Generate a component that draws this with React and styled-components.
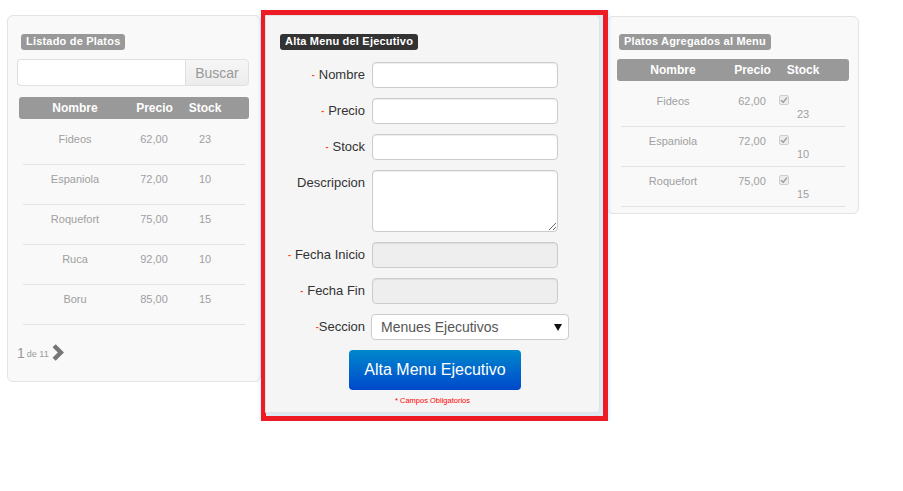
import styled, { createGlobalStyle } from "styled-components"

const GlobalStyle = createGlobalStyle`
  body {
    margin: 0;
    background: #fff;
    font-family: "Liberation Sans", Arial, sans-serif;
  }
`

// Data for both tables
const platos = [
    { nombre: "Fideos", precio: "62,00", stock: 23 },
    { nombre: "Espaniola", precio: "72,00", stock: 10 },
    { nombre: "Roquefort", precio: "75,00", stock: 15 },
    { nombre: "Ruca", precio: "92,00", stock: 10 },
    { nombre: "Boru", precio: "85,00", stock: 15 },
]
const agregados = platos.slice(0, 3)

const campos = [
    { label: "Nombre", req: true, kind: "input" },
    { label: "Precio", req: true, kind: "input" },
    { label: "Stock", req: true, kind: "input" },
    { label: "Descripcion", req: false, kind: "textarea" },
    { label: "Fecha Inicio", req: true, kind: "disabled" },
    { label: "Fecha Fin", req: true, kind: "disabled" },
]

const Check = () => (
    <CheckBox>
        <svg width="8" height="8" viewBox="0 0 8 8">
            <path d="M1 4.2 L3.2 6.3 L7 1.6" fill="none" stroke="#9a9a9a" strokeWidth="1.4" />
        </svg>
    </CheckBox>
)

const App = () => {
    return (
        <Page>
            <GlobalStyle />

            <Panel $width="254px" $pad="18px 9px 20px">
                <Badge $indent="4px">Listado de Platos</Badge>
                <Search>
                    <SearchInput />
                    <SearchButton>Buscar</SearchButton>
                </Search>
                <HeadRow $space="11px 2px 6px">
                    <span>Nombre</span>
                    <span>Precio</span>
                    <span>Stock</span>
                </HeadRow>
                <Rows $side="6px">
                    {platos.map(p => (
                        <Row key={p.nombre}>
                            <Cell>{p.nombre}</Cell>
                            <Cell>{p.precio}</Cell>
                            <StockCell>{p.stock}</StockCell>
                        </Row>
                    ))}
                </Rows>
                <Pager>
                    <span className="num">1</span>
                    <span className="de">de 11</span>
                    <svg width="14" height="17" viewBox="0 0 14 17">
                        <path d="M1.5 3.2 L4.7 0.2 L13 8.5 L4.7 16.8 L1.5 13.8 L6.8 8.5 Z" fill="#777" />
                    </svg>
                </Pager>
            </Panel>

            <Frame>
                <FormPanel>
                    <Badge $dark $indent="14px">Alta Menu del Ejecutivo</Badge>
                    <Form>
                        {campos.map(c => (
                            <Field key={c.label}>
                                <Label>
                                    {c.req && <Req>-</Req>}
                                    {c.label}
                                </Label>
                                {c.kind === "textarea"
                                    ? <TextArea />
                                    : <Input disabled={c.kind === "disabled"} />}
                            </Field>
                        ))}
                        <Field>
                            <Label><Req $tight>-</Req>Seccion</Label>
                            <SelectBox>
                                <span>Menues Ejecutivos</span>
                                <svg width="8" height="7" viewBox="0 0 8 7">
                                    <path d="M0 0 L8 0 L4 7 Z" fill="#111" />
                                </svg>
                            </SelectBox>
                        </Field>
                    </Form>
                    <Submit>Alta Menu Ejecutivo</Submit>
                    <Required>* Campos Obligatorios</Required>
                </FormPanel>
            </Frame>

            <Panel $width="252px" $pad="17px 9px 6px" $shift="-1px">
                <Badge $indent="2px">Platos Agregados al Menu</Badge>
                <HeadRow $space="9px 0 6px">
                    <span>Nombre</span>
                    <span>Precio</span>
                    <span>Stock</span>
                </HeadRow>
                <Rows $side="4px">
                    {agregados.map(p => (
                        <Row key={p.nombre}>
                            <Cell>{p.nombre}</Cell>
                            <Cell>{p.precio}</Cell>
                            <StockCell $stack>
                                <Check />
                                <div>{p.stock}</div>
                            </StockCell>
                        </Row>
                    ))}
                </Rows>
            </Panel>
        </Page>
    )
}

const Page = styled.div`
    display: flex;
    align-items: flex-start;
    padding: 15px 0 0 7px;
`

const Panel = styled.div`
    box-sizing: border-box;
    width: ${({$width}) => $width};
    padding: ${({$pad}) => $pad};
    margin-left: ${({$shift}) => $shift || "0"};
    margin-top: ${({$shift}) => $shift ? "1px" : "0"};
    background: #f9f9f9;
    border: 1px solid #e3e3e3;
    border-radius: 6px;
`

const Badge = styled.div`
    width: fit-content;
    margin-left: ${({$indent}) => $indent || "0"};
    padding: 1px 5px 2px;
    border-radius: 3px;
    background: ${({$dark}) => $dark ? "#333" : "#999"};
    color: #fff;
    font-size: 11px;
    font-weight: bold;
    line-height: 13px;
    letter-spacing: 0.2px;
`

const Search = styled.div`
    display: flex;
    margin-top: 9px;
    height: 27px;
`

const SearchInput = styled.div`
    box-sizing: border-box;
    width: 168px;
    background: #fff;
    border: 1px solid #e0e0e0;
    border-right: none;
    border-radius: 4px 0 0 4px;
`

const SearchButton = styled.div`
    box-sizing: border-box;
    width: 64px;
    display: flex;
    align-items: center;
    justify-content: center;
    background: linear-gradient(#f6f6f6, #ececec);
    border: 1px solid #e0e0e0;
    border-radius: 0 4px 4px 0;
    color: #999;
    font-size: 14px;
`

const HeadRow = styled.div`
    display: grid;
    grid-template-columns: 112px 47px 54px 1fr;
    align-items: center;
    height: 22px;
    margin: ${({$space}) => $space};
    border-radius: 3px;
    background: #999;
    color: #fff;
    font-size: 12px;
    font-weight: bold;
    text-align: center;
`

const Rows = styled.div`
    margin: 0 ${({$side}) => $side};
`

const Row = styled.div`
    display: grid;
    grid-template-columns: 104px 54px 1fr;
    height: 39px;
    border-bottom: 1px solid #e3e3e3;
    color: #a0a0a0;
    font-size: 11px;
    line-height: 13px;
`

const Cell = styled.div`
    padding-top: 8px;
    text-align: center;
`

const StockCell = styled.div`
    padding-top: ${({$stack}) => $stack ? "5px" : "8px"};
    padding-left: ${({$stack}) => $stack ? "0" : "18px"};

    div {
        padding-left: 18px;
    }
`

const CheckBox = styled.span`
    box-sizing: border-box;
    display: flex;
    align-items: center;
    justify-content: center;
    width: 10px;
    height: 10px;
    margin: 3px 0 3px;
    background: #ececec;
    border: 1px solid #cfcfcf;
    border-radius: 2px;
`

const Pager = styled.div`
    display: flex;
    align-items: center;
    margin-top: 19px;
    color: #999;

    .num {
        font-size: 14px;
    }

    .de {
        margin: 3px 2px 0 2px;
        font-size: 9px;
    }
`

const Frame = styled.div`
    position: relative;
    z-index: 1;
    box-sizing: border-box;
    width: 347px;
    margin-top: -5px;
    padding: 0 3px 3px 0;
    border: 5px solid #ed1c24;
    background: #dde9f4;
    box-shadow: 0 2px 4px rgba(82, 168, 236, 0.35);
`

const FormPanel = styled.div`
    margin-left: -1px;
    padding: 18px 0 7px;
    background: #f5f5f5;
    border: 1px solid #e3e3e3;
    border-radius: 0 4px 4px 0;
    text-align: center;
`

const Form = styled.div`
    display: flex;
    flex-direction: column;
    gap: 10px;
    margin-top: 12px;
`

const Field = styled.div`
    display: grid;
    grid-template-columns: 99px auto;
    column-gap: 7px;
    align-items: start;
    text-align: left;
`

const Label = styled.div`
    text-align: right;
    color: #333;
    font-size: 13px;
    line-height: 26px;
    white-space: nowrap;
`

const Req = styled.span`
    margin-right: ${({$tight}) => $tight ? "0" : "4px"};
    color: #ff3b10;
    font-size: 9px;
    font-weight: bold;
    line-height: 1;
    vertical-align: 1px;
`

const Input = styled.input`
    box-sizing: border-box;
    display: block;
    width: 186px;
    height: 26px;
    padding: 0 6px;
    background: ${({disabled}) => disabled ? "#eee" : "#fff"};
    border: 1px solid #ccc;
    border-radius: 4px;
    box-shadow: inset 0 1px 1px rgba(0, 0, 0, 0.075);
    outline: none;
`

const TextArea = styled.textarea`
    box-sizing: border-box;
    display: block;
    width: 186px;
    height: 62px;
    background: #fff;
    border: 1px solid #ccc;
    border-radius: 4px;
    box-shadow: inset 0 1px 1px rgba(0, 0, 0, 0.075);
    outline: none;
`

const SelectBox = styled.div`
    box-sizing: border-box;
    display: flex;
    align-items: center;
    justify-content: space-between;
    width: 198px;
    height: 26px;
    margin-left: -1px;
    padding: 0 6px 0 9px;
    background: #fff;
    border: 1px solid #ccc;
    border-radius: 4px;
    color: #555;
    font-size: 14px;
`

const Submit = styled.div`
    display: inline-flex;
    align-items: center;
    justify-content: center;
    width: 172px;
    height: 40px;
    margin: 10px 0 0 5px;
    border-radius: 4px;
    background: linear-gradient(#0088cc, #0048cc);
    color: #fff;
    font-size: 16px;
`

const Required = styled.div`
    margin-top: 6px;
    color: #f00;
    font-size: 7.5px;
    line-height: 9px;
`

export default App
